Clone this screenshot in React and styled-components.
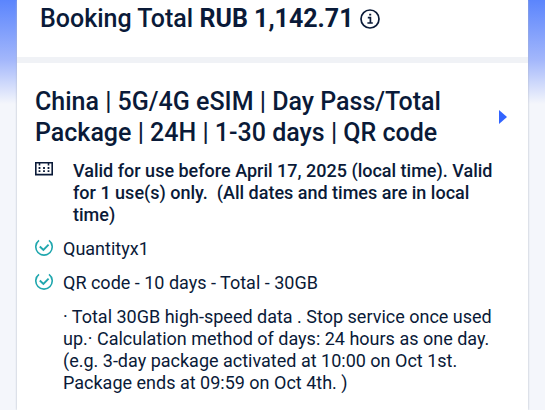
import styled, { createGlobalStyle } from "styled-components";

const GlobalStyle = createGlobalStyle`
  * {
    box-sizing: border-box;
  }
  body {
    margin: 0;
    background-color: #f4f6fb;
    color: #0a1a38;
    font-family: Roboto, "Liberation Sans", sans-serif;
    font-size: 18px;
    line-height: 22px;
  }
`;
const Page = styled.div`
  min-height: 100vh;
  padding: 0 17px;
  background: linear-gradient(#5b85fd, #a3b7fb 60px, #f4f6fb 104px);
`;
const Card = styled.main`
  min-height: 100vh;
  background-color: #fff;
  box-shadow: 0 0 2px #aeb5c4;
`;
const TotalBar = styled.header`
  display: flex;
  align-items: center;
  gap: 6px;
  padding: 4px 23px 23px;
  border-bottom: 6px solid #f0f2f6;
  font-size: 25px;
  font-weight: 500;
  line-height: 30px;
`;
const TotalText = styled.p`
  margin: 0;
`;
const Amount = styled.strong`
  font-weight: 700;
`;
const InfoButton = styled.button`
  display: flex;
  padding: 0;
  border: 0;
  background: none;
  color: inherit;
`;
const Booking = styled.section`
  display: flex;
  flex-direction: column;
  gap: 12px;
  padding: 23px 18px 16px;
`;
const TitleLink = styled.a`
  display: flex;
  align-items: center;
  justify-content: space-between;
  gap: 24px;
  color: inherit;
  text-decoration: none;
`;
const Title = styled.h1`
  margin: 0;
  max-width: 440px;
  font-size: 25px;
  font-weight: 500;
  line-height: 31px;
`;
const Row = styled.div`
  display: flex;
  gap: ${(props) => (props.$wide ? "20px" : "10px")};
  font-weight: ${(props) => (props.$wide ? 500 : 400)};
`;
const RowText = styled.p`
  flex: 1;
  margin: 0;
  white-space: pre-wrap;
`;
const Details = styled.p`
  margin: 0;
  padding-left: 28px;
`;
const Icon = styled.svg`
  flex: none;
  fill: none;
  stroke: currentColor;
`;
const CheckSvg = styled(Icon)`
  color: #20a7ae;
`;
const ArrowSvg = styled(Icon)`
  fill: #3264ff;
  stroke: none;
`;

const InfoIcon = () => (
  <Icon width="20" height="20" viewBox="0 0 20 20" strokeWidth="1.7">
    <circle cx="10" cy="10" r="9" />
    <path d="M7.8 8.7h2.6v5M7.4 14h5.4M9.2 5.6h2" />
  </Icon>
);
const CalendarIcon = () => (
  <Icon width="18" height="18" viewBox="0 0 18 18" strokeWidth="1.6">
    <path d="M.8 2.8h16.4v11.8H.8zM4.5 2v3.4M13.5 2v3.4" />
    <path
      d="M3.6 8h1.8M8.1 8h1.8M12.6 8h1.8M3.6 11.2h1.8M8.1 11.2h1.8M12.6 11.2h1.8"
      strokeWidth="1.8"
    />
  </Icon>
);
const CheckIcon = () => (
  <CheckSvg width="18" height="20" viewBox="0 0 18 20" strokeWidth="1.6">
    <path d="M4 2.4A8.2 8.2 0 1 0 14 2.4" />
    <path d="M4.8 8.5l3.6 3.5 5.2-5.3" strokeWidth="1.9" />
  </CheckSvg>
);

const features = ["Quantityx1", "QR code - 10 days - Total - 30GB"];

const App = () => {
  return (
    <>
      <GlobalStyle />
      <Page>
        <Card>
          <TotalBar>
            <TotalText>
              Booking Total <Amount>RUB 1,142.71</Amount>
            </TotalText>
            <InfoButton type="button" aria-label="Price details">
              <InfoIcon />
            </InfoButton>
          </TotalBar>
          <Booking>
            <TitleLink href="#package">
              <Title>
                China | 5G/4G eSIM | Day Pass/Total Package | 24H | 1-30 days |
                QR code
              </Title>
              <ArrowSvg width="12" height="14" viewBox="0 0 12 14">
                <path d="M1 0l8 7-8 7z" />
              </ArrowSvg>
            </TitleLink>
            <Row $wide>
              <CalendarIcon />
              <RowText>
                {
                  "Valid for use before April 17, 2025 (local time). Valid for 1 use(s) only.  (All dates and times are in local time)"
                }
              </RowText>
            </Row>
            {features.map((feature) => (
              <Row key={feature}>
                <CheckIcon />
                <RowText>{feature}</RowText>
              </Row>
            ))}
            <Details>
              · Total 30GB high-speed data . Stop service once used up.·
              Calculation method of days: 24 hours as one day. (e.g. 3-day
              package activated at 10:00 on Oct 1st. Package ends at 09:59 on
              Oct 4th. )
            </Details>
          </Booking>
        </Card>
      </Page>
    </>
  );
};

export default App;
